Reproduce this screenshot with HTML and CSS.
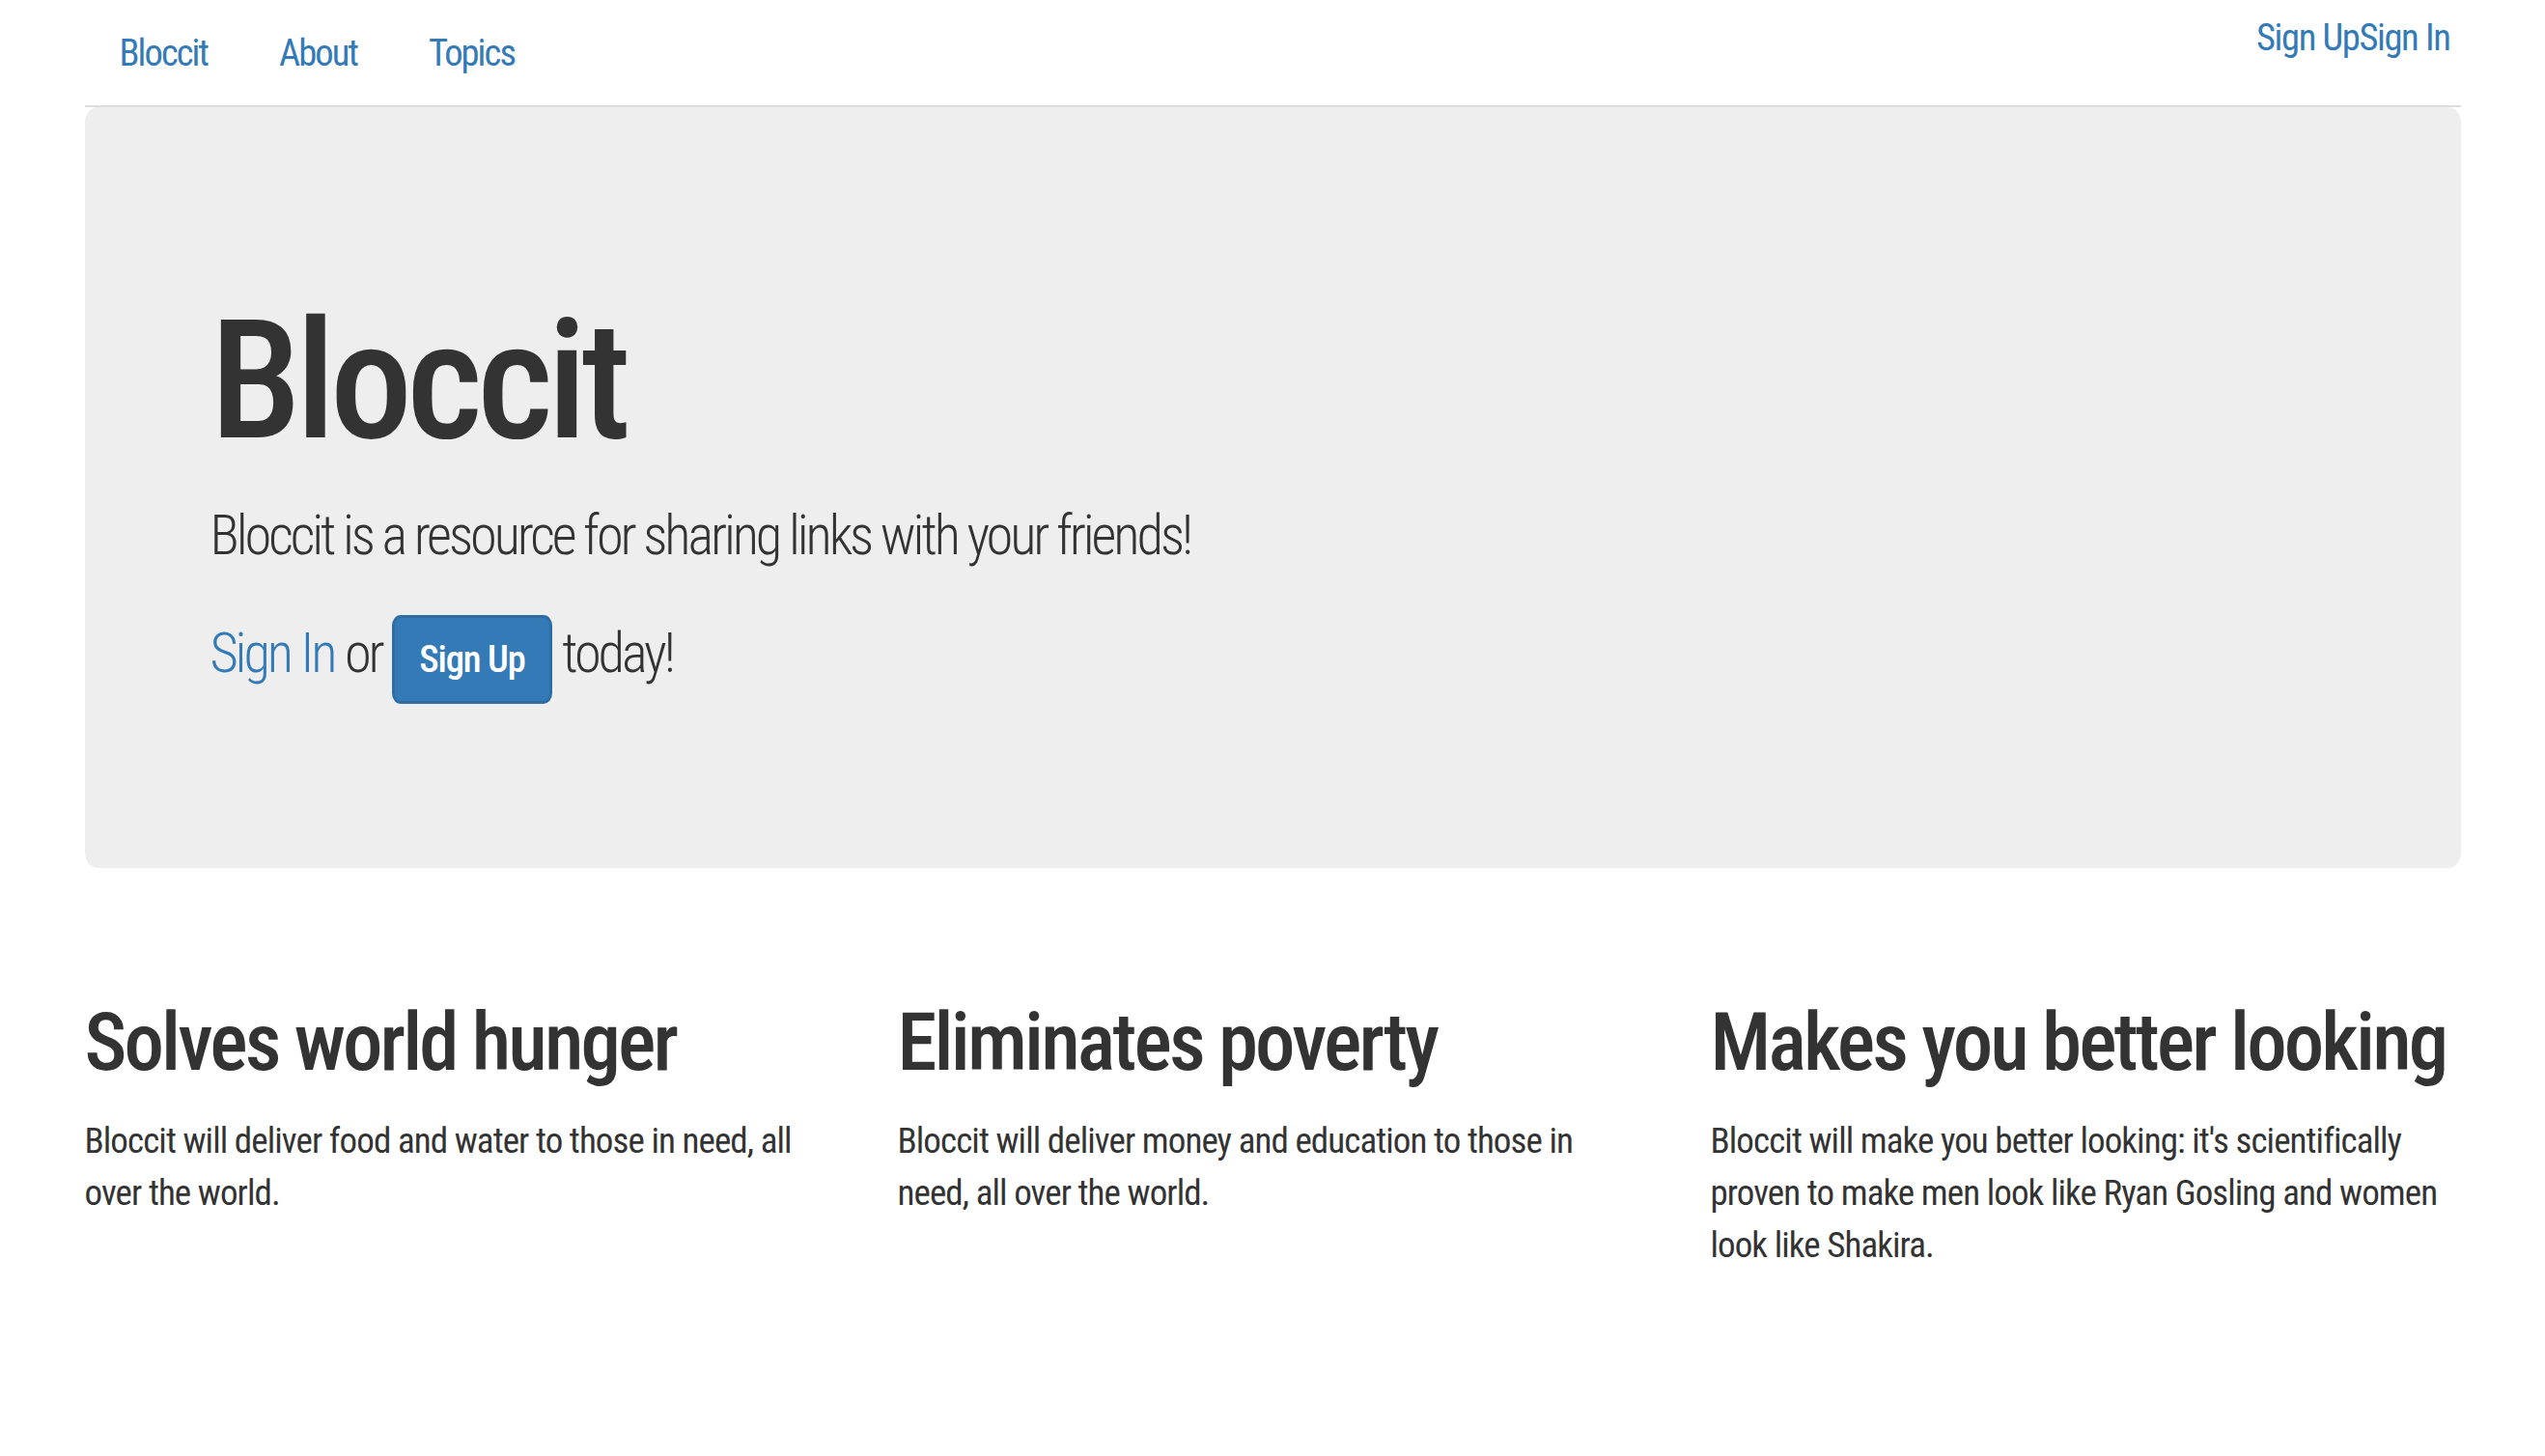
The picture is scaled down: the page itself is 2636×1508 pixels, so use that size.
FILE: index.html
```html
<!DOCTYPE html>
<html lang="en">
<head>
<meta charset="utf-8">
<title>Bloccit</title>
<link rel="stylesheet" href="styles.css">
</head>
<body>
<div class="container">
  <header class="topbar">
    <ul class="tabs">
      <li><a href="#">Bloccit</a></li>
      <li><a href="#">About</a></li>
      <li><a href="#">Topics</a></li>
    </ul>
    <div class="auth"><a href="#">Sign Up</a><a href="#">Sign In</a></div>
  </header>

  <section class="jumbotron">
    <h1>Bloccit</h1>
    <p class="lead">Bloccit is a resource for sharing links with your friends!</p>
    <p class="lead cta"><a href="#">Sign In</a> or <a href="#" class="btn">Sign Up</a> today!</p>
  </section>

  <div class="features">
    <div class="feature">
      <h2>Solves world hunger</h2>
      <p>Bloccit will deliver food and water to those in need, all over the world.</p>
    </div>
    <div class="feature">
      <h2>Eliminates poverty</h2>
      <p>Bloccit will deliver money and education to those in need, all over the world.</p>
    </div>
    <div class="feature">
      <h2>Makes you better looking</h2>
      <p>Bloccit will make you better looking: it's scientifically proven to make men look like Ryan Gosling and women look like Shakira.</p>
    </div>
  </div>
</div>
</body>
</html>
```

FILE: styles.css
```css
html, body {
  margin: 0;
  padding: 0;
  background: #fff;
}

body {
  font-family: "Roboto Condensed", "Liberation Sans", Arial, sans-serif;
  color: #333;
  font-size: 37px;
  line-height: 54px;
  letter-spacing: -0.025em;
}

a {
  color: #337ab7;
  text-decoration: none;
}

.container {
  width: 2461px;
  margin: 0 auto;
}

/* top navigation */
.topbar {
  display: flex;
  justify-content: space-between;
  align-items: flex-start;
  border-bottom: 2px solid #ddd;
}

.tabs {
  display: flex;
  list-style: none;
  margin: 0;
  padding: 0;
}

.tabs li {
  margin-right: 2px;
}

.tabs a {
  display: block;
  padding: 27px 36px;
  font-size: 38.5px;
  line-height: 55px;
  letter-spacing: -0.05em;
}

.auth {
  padding: 12px 11px 0 0;
  font-size: 38.5px;
  line-height: 54px;
  letter-spacing: -0.035em;
}

/* hero */
.jumbotron {
  background: #eee;
  border-radius: 13px / 16px;
  padding: 130px 130px;
  margin-bottom: 82px;
}

.jumbotron h1 {
  font-size: 171px;
  line-height: 187px;
  font-weight: 500;
  letter-spacing: -0.035em;
  margin: 60px 0 27px;
}

.lead {
  font-size: 56.5px;
  line-height: 81px;
  font-weight: 300;
  letter-spacing: -0.055em;
  margin: 0 0 40.5px;
}

.cta {
  word-spacing: 1px;
}

.btn {
  display: inline-block;
  padding: 16px 25px;
  font-size: 38.5px;
  line-height: 54px;
  font-weight: 500;
  letter-spacing: -0.03em;
  word-spacing: 0;
  color: #fff;
  background: #337ab7;
  border: 3px solid #2e6da4;
  border-radius: 9px / 11px;
}

/* features */
.features {
  display: grid;
  grid-template-columns: repeat(3, 1fr);
  column-gap: 65px;
}

.feature h2 {
  font-size: 83px;
  line-height: 89px;
  font-weight: 500;
  letter-spacing: -0.035em;
  margin: 54px 0 31px;
}

.feature p {
  margin: 0 0 27px;
}
```
